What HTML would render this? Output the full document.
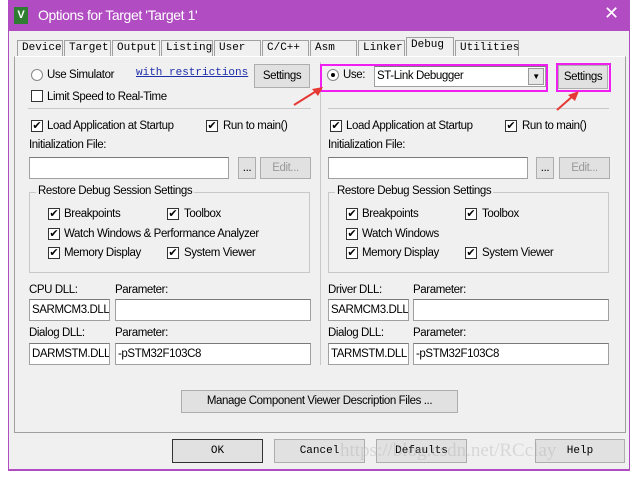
<!DOCTYPE html><html><head><style>
body{margin:0;width:640px;height:477px;background:#fff;position:relative;overflow:hidden;font-family:"Liberation Sans",sans-serif;font-size:11.5px;color:#000}
div,span{position:absolute;box-sizing:border-box}
.t{white-space:nowrap;letter-spacing:-0.4px;padding-top:1px}
.m{font-family:"Liberation Mono",monospace;font-size:11px;white-space:nowrap}
.btn{background:#e1e1e1;border:1px solid #adadad;text-align:center;white-space:nowrap;letter-spacing:-0.4px}
.in{background:#fff;border:1px solid #a0a0a0;border-top-color:#7a7a7a;white-space:nowrap;padding-left:2px;overflow:hidden;letter-spacing:-0.4px;line-height:20px}
.cb{width:12px;height:12px;border:1px solid #333;background:#fff;font-size:11px;line-height:10px;text-align:center}
.grp{border:1px solid #c8c8c8}
.tab{top:40px;height:17px;border:1px solid #a0a0a0;border-bottom:none;background:#f0f0f0;padding:1px 4px}
.bb{background:#e1e1e1;border:1px solid #adadad;text-align:center;font-family:"Liberation Mono",monospace;font-size:11px;line-height:22px}
</style></head><body>
<div style="left:8px;top:0;width:622px;height:471px;background:#b14cc2"></div>
<div style="left:9px;top:31px;width:620px;height:438px;background:#f0f0f0"></div>
<div style="left:14px;top:7px;width:14px;height:17px;background:#2e7d32;color:#fff;font-weight:bold;font-size:11px;text-align:center;line-height:17px">V</div>
<div class="t" style="left:38px;top:6px;font-size:14px;color:#fff">Options for Target 'Target 1'</div>
<div style="left:604px;top:3px;color:#fff;font-size:18px">✕</div>

<div class="tab m" style="left:17px;width:46px">Device</div>
<div class="tab m" style="left:64px;width:47px">Target</div>
<div class="tab m" style="left:112px;width:48px">Output</div>
<div class="tab m" style="left:161px;width:52px">Listing</div>
<div class="tab m" style="left:214px;width:47px">User</div>
<div class="tab m" style="left:262px;width:47px">C/C++</div>
<div class="tab m" style="left:310px;width:47px">Asm</div>
<div class="tab m" style="left:358px;width:47px">Linker</div>
<div class="tab m" style="left:406px;top:37px;width:48px;height:20px">Debug</div>
<div class="tab m" style="left:455px;width:64px">Utilities</div>
<div style="left:14px;top:56px;width:612px;height:377px;border:1px solid #a0a0a0;border-top-color:#fff"></div>
<div style="left:320px;top:62px;width:1px;height:303px;background:#c8c8c8"></div>
<div style="left:28px;top:108px;width:283px;height:1px;background:#c8c8c8"></div>
<div style="left:328px;top:108px;width:281px;height:1px;background:#c8c8c8"></div>

<div style="left:31px;top:69px;width:12px;height:12px;border:1px solid #888;border-radius:50%;background:#fff"></div>
<div class="t" style="left:47px;top:68px">Use Simulator</div>
<div class="m" style="left:136px;top:67px;color:#1d2ea8;text-decoration:underline">with restrictions</div>
<div class="btn" style="left:254px;top:64px;width:56px;height:24px;line-height:22px">Settings</div>
<div class="cb" style="left:31px;top:90px"></div>
<div class="t" style="left:47px;top:90px">Limit Speed to Real-Time</div>

<div style="left:320px;top:64px;width:228px;height:28px;border:2px solid #f01ef0"></div>
<div style="left:327px;top:69px;width:12px;height:12px;border:1px solid #888;border-radius:50%;background:#fff"><span style="left:3px;top:3px;width:4px;height:4px;border-radius:50%;background:#000"></span></div>
<div class="t" style="left:343px;top:68px">Use:</div>
<div class="in" style="left:374px;top:66px;width:172px;height:21px;line-height:19px">ST-Link Debugger<span style="right:1px;top:1px;width:16px;height:17px;background:#e8e8e8;border:1px solid #999;font-size:8px;text-align:center;line-height:15px">▼</span></div>
<div style="left:556px;top:63px;width:55px;height:29px;border:2px solid #f01ef0"></div>
<div class="btn" style="left:558px;top:65px;width:50px;height:24px;line-height:22px">Settings</div>
<svg style="position:absolute;left:290px;top:84px" width="40" height="25"><line x1="4" y1="21" x2="28" y2="6" stroke="#e53935" stroke-width="2"/><polygon points="33,3 22,5 28,12" fill="#e53935"/></svg>
<svg style="position:absolute;left:554px;top:88px" width="30" height="25"><line x1="3" y1="22" x2="20" y2="7" stroke="#e53935" stroke-width="2"/><polygon points="25,3 14,7 21,13" fill="#e53935"/></svg>

<div class="cb" style="left:31px;top:120px">✔</div><div class="t" style="left:47px;top:119px">Load Application at Startup</div>
<div class="cb" style="left:206px;top:120px">✔</div><div class="t" style="left:223px;top:119px">Run to main()</div>
<div class="t" style="left:29px;top:138px">Initialization File:</div>
<div class="in" style="left:29px;top:157px;width:200px;height:22px"></div>
<div class="btn" style="left:238px;top:157px;width:18px;height:22px;line-height:20px">...</div>
<div class="btn" style="left:260px;top:157px;width:51px;height:22px;line-height:20px;color:#999">Edit...</div>
<div class="grp" style="left:29px;top:192px;width:281px;height:81px"></div>
<div class="t" style="left:36px;top:184px;background:#f0f0f0;padding:1px 2px 0">Restore Debug Session Settings</div>
<div class="cb" style="left:48px;top:208px">✔</div><div class="t" style="left:64px;top:207px">Breakpoints</div>
<div class="cb" style="left:167px;top:208px">✔</div><div class="t" style="left:184px;top:207px">Toolbox</div>
<div class="cb" style="left:48px;top:228px">✔</div><div class="t" style="left:64px;top:227px">Watch Windows &amp; Performance Analyzer</div>
<div class="cb" style="left:48px;top:247px">✔</div><div class="t" style="left:64px;top:246px">Memory Display</div>
<div class="cb" style="left:167px;top:247px">✔</div><div class="t" style="left:184px;top:246px">System Viewer</div>
<div class="t" style="left:29px;top:283px">CPU DLL:</div>
<div class="t" style="left:115px;top:283px">Parameter:</div>
<div class="in" style="left:29px;top:299px;width:81px;height:22px">SARMCM3.DLL</div>
<div class="in" style="left:115px;top:299px;width:196px;height:22px"></div>
<div class="t" style="left:29px;top:326px">Dialog DLL:</div>
<div class="t" style="left:115px;top:326px">Parameter:</div>
<div class="in" style="left:29px;top:343px;width:81px;height:22px">DARMSTM.DLL</div>
<div class="in" style="left:115px;top:343px;width:196px;height:22px">-pSTM32F103C8</div>

<div class="cb" style="left:330px;top:120px">✔</div><div class="t" style="left:346px;top:119px">Load Application at Startup</div>
<div class="cb" style="left:505px;top:120px">✔</div><div class="t" style="left:522px;top:119px">Run to main()</div>
<div class="t" style="left:328px;top:138px">Initialization File:</div>
<div class="in" style="left:328px;top:157px;width:200px;height:22px"></div>
<div class="btn" style="left:536px;top:157px;width:18px;height:22px;line-height:20px">...</div>
<div class="btn" style="left:559px;top:157px;width:51px;height:22px;line-height:20px;color:#999">Edit...</div>
<div class="grp" style="left:328px;top:192px;width:281px;height:81px"></div>
<div class="t" style="left:335px;top:184px;background:#f0f0f0;padding:1px 2px 0">Restore Debug Session Settings</div>
<div class="cb" style="left:346px;top:208px">✔</div><div class="t" style="left:362px;top:207px">Breakpoints</div>
<div class="cb" style="left:465px;top:208px">✔</div><div class="t" style="left:482px;top:207px">Toolbox</div>
<div class="cb" style="left:346px;top:228px">✔</div><div class="t" style="left:362px;top:227px">Watch Windows</div>
<div class="cb" style="left:346px;top:247px">✔</div><div class="t" style="left:362px;top:246px">Memory Display</div>
<div class="cb" style="left:465px;top:247px">✔</div><div class="t" style="left:482px;top:246px">System Viewer</div>
<div class="t" style="left:328px;top:283px">Driver DLL:</div>
<div class="t" style="left:413px;top:283px">Parameter:</div>
<div class="in" style="left:328px;top:299px;width:81px;height:22px">SARMCM3.DLL</div>
<div class="in" style="left:413px;top:299px;width:196px;height:22px"></div>
<div class="t" style="left:328px;top:326px">Dialog DLL:</div>
<div class="t" style="left:413px;top:326px">Parameter:</div>
<div class="in" style="left:328px;top:343px;width:81px;height:22px">TARMSTM.DLL</div>
<div class="in" style="left:413px;top:343px;width:196px;height:22px">-pSTM32F103C8</div>

<div class="btn" style="left:181px;top:390px;width:277px;height:23px;line-height:21px">Manage Component Viewer Description Files ...</div>

<div class="bb" style="left:172px;top:439px;width:91px;height:24px;border:1px solid #333">OK</div>
<div class="bb" style="left:274px;top:439px;width:91px;height:24px">Cancel</div>
<div class="bb" style="left:376px;top:439px;width:91px;height:24px">Defaults</div>
<div class="bb" style="left:535px;top:439px;width:90px;height:24px">Help</div>
<div style="left:340px;top:440px;font-family:'Liberation Serif',serif;font-size:19px;color:rgba(170,170,170,0.35);white-space:nowrap">https://blog.csdn.net/RCclay</div>
</body></html>
